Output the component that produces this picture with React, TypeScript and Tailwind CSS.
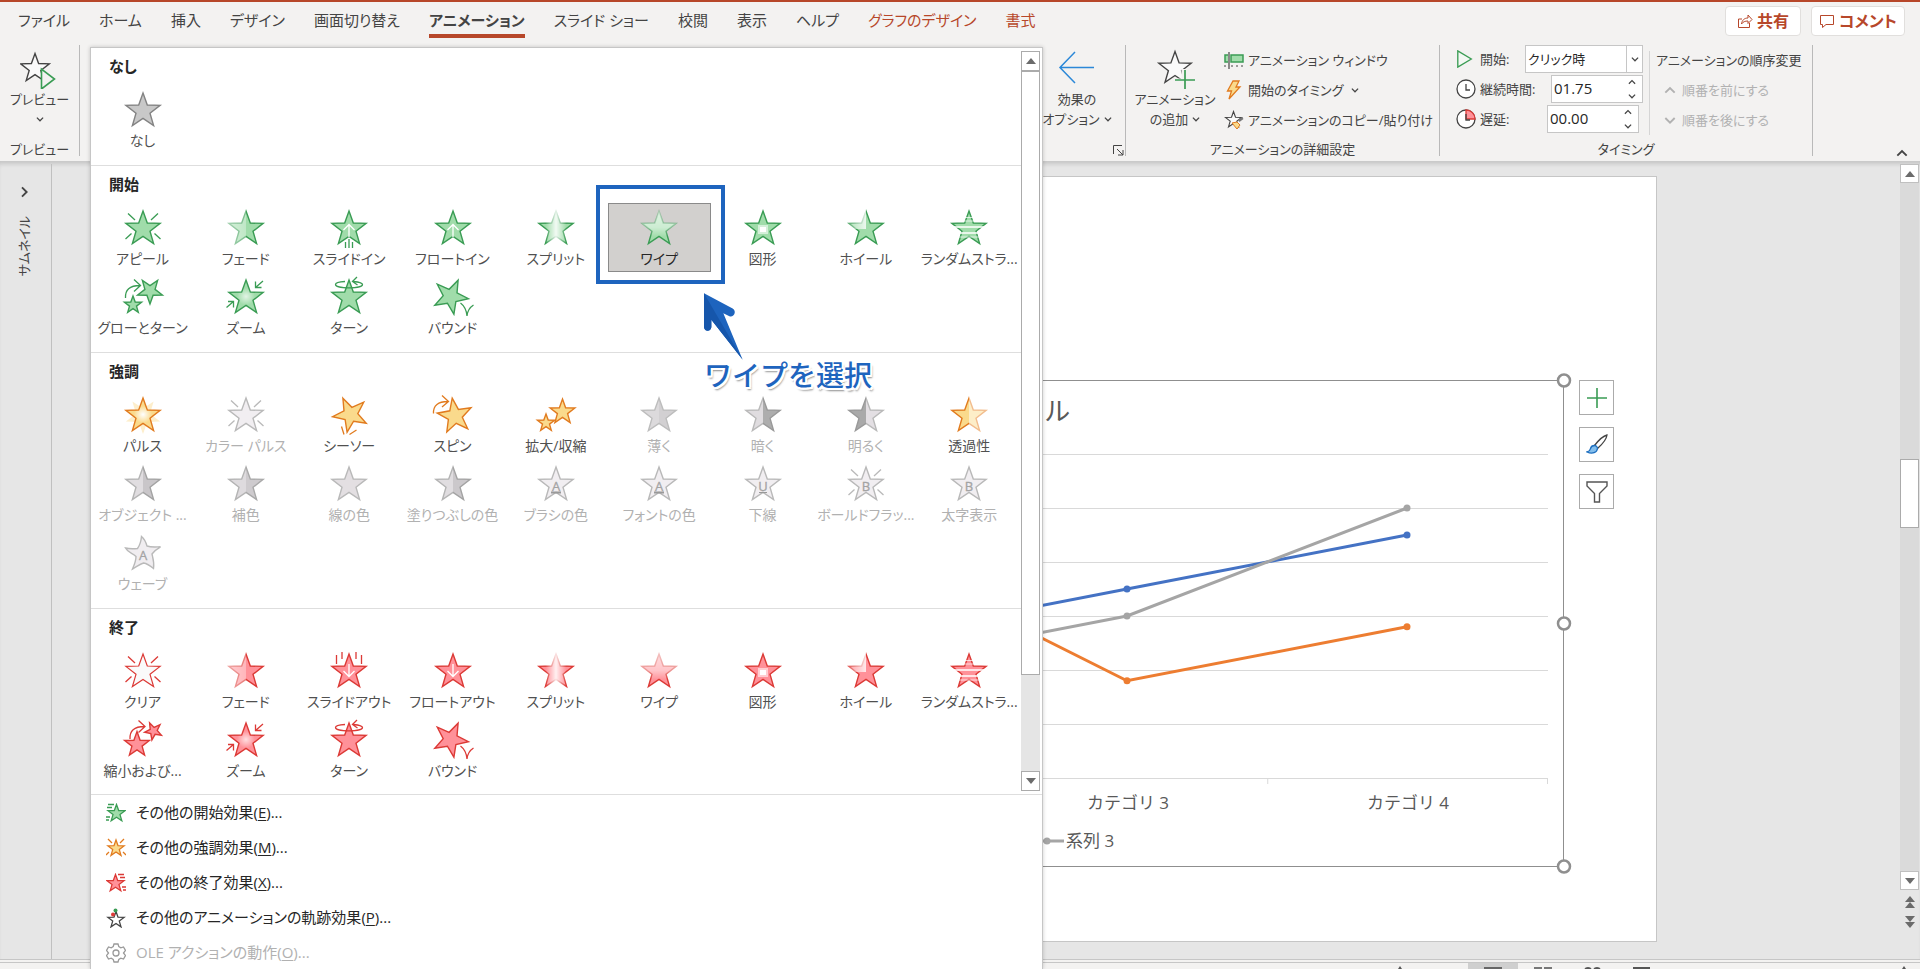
import type { ReactNode } from "react";

type Tone = "green" | "orange" | "red" | "gray" | "dark";

const tones: Record<Tone, { line: string; fill: string }> = {
  green: { line: "#3a9c54", fill: "#a0dcaa" },
  orange: { line: "#e17b1f", fill: "#fada8c" },
  red: { line: "#dc3a36", fill: "#ff9199" },
  gray: { line: "#b9b9b9", fill: "#e3dfe2" },
  dark: { line: "#838383", fill: "#c8c8c8" },
};

// points of a five pointed star, rot in degrees clockwise
function star(cx: number, cy: number, r: number, rot = 0) {
  const pts: string[] = [];
  for (let i = 0; i < 10; i++) {
    const a = ((i * 36 + rot - 90) * Math.PI) / 180;
    const d = i % 2 ? r * 0.41 : r;
    pts.push(`${(cx + d * Math.cos(a)).toFixed(1)},${(cy + d * Math.sin(a)).toFixed(1)}`);
  }
  return pts.join(" ");
}

const MAIN = star(24, 24, 18);

const rays = "M9 8.5l7 6.5M39 8.5l-7 6.5M6.5 34l6-5.5M41.5 34l-6-5.5";

// extra strokes drawn round the star in the tone's colour
const extras: Record<string, string> = {
  appear: rays,
  clear: rays,
  colorPulse: rays,
  boldFlash: rays,
  slideIn: "M20.5 37v6M24 34v9M27.5 37v6",
  slideOut: "M11.5 7v9M17 4v7M31 4v7M36.5 7v9",
  zoom: "M41 7l-7.5 6.5M33.5 7.5v6h6M4.5 33.5l7-6M6 27.5h5.5v6",
  turn: "M20 7.5c-5 .3-9.500 1.300-9.500 3 0 2 6 3.300 13.500 3.300s13.500-1.300 13.500-3.300c0-1.600-4-2.500-9-3M32 3l-4.500 4.500 5 3.500",
  bounce: "M31.5 29c4 3 6 7 6.500 13 .5-5 2.500-8.500 6.500-11",
  seesaw: "M16.5 34.5l2.500 8M24.500 42.500l7-4.500",
  spin: "M4.5 21.5c-.5-8 5-12 14-12M13 3.500l6.500 6-6.500 5.500",
  grow: "M6.5 24c-.5-8 4-12.500 14.500-12.500M15 5.500l6.500 6-6.500 6",
  shrink: "M11 22c-.5-8 4-12.500 14.500-12.500M19.500 3.500l6.500 6-6.500 6",
};

const halves: Record<string, [string, string, string, string]> = {
  objectColor: ["#e0dde0", "#c9c6c9", "#b4b4b4", "#a3a3a3"],
  complement: ["#dedbde", "#cecbce", "#b4b4b4", "#a9a9a9"],
  fillColor: ["#e0dde0", "#cbc8cb", "#b4b4b4", "#a3a3a3"],
  desaturate: ["#dcdadc", "#d2d0d2", "#bdbdbd", "#bdbdbd"],
  darken: ["#dfdcdf", "#adadad", "#b9b9b9", "#999999"],
  lighten: ["#a9a9a9", "#e3dfe3", "#999999", "#b9b9b9"],
  transparency: ["#fada8c", "#fdeec8", "#e17b1f", "#f2bd8e"],
};

const letters: Record<string, string> = {
  brushColor: "A",
  fontColor: "A",
  underline: "U",
  boldFlash: "B",
  boldReveal: "B",
  wave: "A",
};

function StarBody({ kind, tone }: { kind: string; tone: Tone }) {
  const { line, fill } = tones[tone];
  const id = `${kind}-${tone}`;
  const s = { stroke: line, fill, strokeWidth: 1.4 };

  if (halves[kind]) {
    const [f1, f2, s1, s2] = halves[kind];
    return (
      <>
        <defs>
          <linearGradient id={`${id}-f`} x1="7" x2="41" y1="0" y2="0" gradientUnits="userSpaceOnUse">
            <stop offset=".5" stopColor={f1} />
            <stop offset=".5" stopColor={f2} />
          </linearGradient>
          <linearGradient id={`${id}-s`} x1="7" x2="41" y1="0" y2="0" gradientUnits="userSpaceOnUse">
            <stop offset=".5" stopColor={s1} />
            <stop offset=".5" stopColor={s2} />
          </linearGradient>
        </defs>
        <polygon points={MAIN} fill={`url(#${id}-f)`} stroke={`url(#${id}-s)`} strokeWidth="1.4" />
      </>
    );
  }

  if (kind === "wave") {
    return (
      <path
        d="M22.5 6.5c3 2.500 4.500 6 5.500 9.500 4 1.500 8 1 13.500.8-3.500 2-6 4-8.500 7.200 1 4.500 2.500 8.500 1.500 14.500-3.500-3-6.500-5-10-5.500-4 1-7 4-11 6 2-4.500 3.500-8 3.500-12.500-3-3.500-8-3.500-10.500-8.500 4 1 7.500 1 12 .5 2.500-3.500 3.500-6.500 4-12z"
        fill="#f0edf0"
        stroke={line}
        strokeWidth="1.4"
      />
    );
  }

  if (letters[kind] || kind === "colorPulse") {
    return <polygon points={MAIN} {...s} fill="#f1eef1" />;
  }

  switch (kind) {
    case "fade":
    case "split":
    case "wipe":
    case "wheel": {
      const vertical = kind === "wipe";
      return (
        <>
          <defs>
            <linearGradient
              id={`${id}-g`}
              x1="7"
              y1="7"
              x2={vertical ? 7 : 41}
              y2={vertical ? 38 : 7}
              gradientUnits="userSpaceOnUse"
            >
              {kind === "fade" && (
                <>
                  <stop offset="0" stopColor="#777" />
                  <stop offset=".5" stopColor="#aaa" />
                  <stop offset=".5" stopColor="#fff" />
                </>
              )}
              {kind === "split" && (
                <>
                  <stop offset=".2" stopColor="#fff" />
                  <stop offset=".5" stopColor="#222" />
                  <stop offset=".8" stopColor="#fff" />
                </>
              )}
              {kind === "wipe" && (
                <>
                  <stop offset="0" stopColor="#555" />
                  <stop offset=".5" stopColor="#888" />
                  <stop offset=".8" stopColor="#fff" />
                </>
              )}
              {kind === "wheel" && (
                <>
                  <stop offset="0" stopColor="#ccc" />
                  <stop offset=".5" stopColor="#333" />
                </>
              )}
            </linearGradient>
            <mask id={`${id}-m`} maskUnits="userSpaceOnUse" x="0" y="0" width="48" height="44">
              {kind === "wheel" ? (
                <>
                  <rect width="48" height="44" fill="#fff" />
                  <rect width="24" height="24" fill={`url(#${id}-g)`} />
                </>
              ) : (
                <rect width="48" height="44" fill={`url(#${id}-g)`} />
              )}
            </mask>
          </defs>
          <polygon points={MAIN} fill="#fff" />
          <polygon points={MAIN} {...s} mask={`url(#${id}-m)`} />
        </>
      );
    }
    case "slideIn":
    case "floatIn":
      return (
        <>
          <polygon points={MAIN} {...s} />
          <path d="M24 32V19.5M18.500 25l5.500-5.500 5.500 5.500" fill="none" stroke="#fff" strokeWidth="1.3" />
        </>
      );
    case "slideOut":
    case "floatOut":
      return (
        <>
          <polygon points={MAIN} {...s} />
          <path d="M24 16v12.5M18.500 23l5.500 5.500 5.500-5.500" fill="none" stroke="#fff" strokeWidth="1.3" />
        </>
      );
    case "shape":
      return (
        <>
          <polygon points={MAIN} {...s} />
          <rect x="19" y="20" width="10" height="9" fill="#fff" opacity=".55" />
          <rect x="21" y="22" width="6" height="5" fill="#fff" />
        </>
      );
    case "random":
      return (
        <>
          <polygon points={MAIN} {...s} />
          <path d="M5 22h38M5 28h38" stroke="#fff" strokeWidth="1.3" />
          <path d="M5 16h38M5 32h38M5 12.5h38" stroke="#fff" strokeWidth="1" opacity=".7" />
        </>
      );
    case "zoom":
    case "pulse":
      return (
        <>
          <defs>
            <radialGradient id={`${id}-r`}>
              <stop offset="0" stopColor="#fff" stopOpacity={kind === "pulse" ? 1 : 0.7} />
              <stop offset=".6" stopColor="#fff" stopOpacity="0" />
            </radialGradient>
          </defs>
          {kind === "pulse" && <polygon points={star(24, 24, 18, 36)} fill="#fdeecb" />}
          <polygon points={MAIN} {...s} />
          <polygon points={star(24, 24, 16)} fill={`url(#${id}-r)`} />
        </>
      );
    case "clear":
      return <polygon points={MAIN} {...s} fill="#fafafa" strokeWidth="1.2" />;
    case "bounce":
      return <polygon points={star(21.5, 22.5, 18, 25)} {...s} />;
    case "seesaw":
      return <polygon points={star(25.5, 22.5, 18, -25)} {...s} />;
    case "spin":
      return <polygon points={star(26, 24, 18, -9)} {...s} />;
    case "grow":
      return (
        <>
          <polygon points={star(31, 17, 13, 180)} {...s} />
          <polygon points={star(14, 31, 9)} {...s} />
        </>
      );
    case "shrink":
      return (
        <>
          <polygon points={star(34.5, 14, 9, 190)} {...s} />
          <polygon points={star(18, 27.5, 13)} {...s} />
        </>
      );
    case "growShrink":
      return (
        <>
          <polygon points={star(30.5, 20, 13)} {...s} />
          <polygon points={star(14, 31, 9)} {...s} />
        </>
      );
    default:
      return <polygon points={MAIN} {...s} />;
  }
}

function EffectIcon({ kind, tone }: { kind: string; tone: Tone }) {
  return (
    <svg viewBox="0 0 48 44" className="h-11 w-12 shrink-0" aria-hidden="true">
      <StarBody kind={kind} tone={tone} />
      {extras[kind] && <path d={extras[kind]} fill="none" stroke={tones[tone].line} strokeWidth="1.3" />}
      {letters[kind] && (
        <text x="24" y="30" textAnchor="middle" fontSize="13" fill="#a3a3a3" stroke="#a3a3a3" strokeWidth=".3">
          {letters[kind]}
        </text>
      )}
      {(kind === "brushColor" || kind === "fontColor") && <path d="M19 31.5h10" stroke="#999" strokeWidth="2" />}
      {kind === "underline" && <path d="M20 31.5h8" stroke="#999" />}
    </svg>
  );
}

type Effect = { name: string; kind: string; tone?: Tone; selected?: boolean; off?: boolean };
type Section = { title: string; tone: Tone; effects: Effect[] };

const sections: Section[] = [
  { title: "なし", tone: "dark", effects: [{ name: "なし", kind: "plain" }] },
  {
    title: "開始",
    tone: "green",
    effects: [
      { name: "アピール", kind: "appear" },
      { name: "フェード", kind: "fade" },
      { name: "スライドイン", kind: "slideIn" },
      { name: "フロートイン", kind: "floatIn" },
      { name: "スプリット", kind: "split" },
      { name: "ワイプ", kind: "wipe", selected: true },
      { name: "図形", kind: "shape" },
      { name: "ホイール", kind: "wheel" },
      { name: "ランダムストラ...", kind: "random" },
      { name: "グローとターン", kind: "grow" },
      { name: "ズーム", kind: "zoom" },
      { name: "ターン", kind: "turn" },
      { name: "バウンド", kind: "bounce" },
    ],
  },
  {
    title: "強調",
    tone: "orange",
    effects: [
      { name: "パルス", kind: "pulse" },
      { name: "カラー パルス", kind: "colorPulse", tone: "gray", off: true },
      { name: "シーソー", kind: "seesaw" },
      { name: "スピン", kind: "spin" },
      { name: "拡大/収縮", kind: "growShrink" },
      { name: "薄く", kind: "desaturate", tone: "gray", off: true },
      { name: "暗く", kind: "darken", tone: "gray", off: true },
      { name: "明るく", kind: "lighten", tone: "gray", off: true },
      { name: "透過性", kind: "transparency" },
      { name: "オブジェクト ...", kind: "objectColor", tone: "gray", off: true },
      { name: "補色", kind: "complement", tone: "gray", off: true },
      { name: "線の色", kind: "plain", tone: "gray", off: true },
      { name: "塗りつぶしの色", kind: "fillColor", tone: "gray", off: true },
      { name: "ブラシの色", kind: "brushColor", tone: "gray", off: true },
      { name: "フォントの色", kind: "fontColor", tone: "gray", off: true },
      { name: "下線", kind: "underline", tone: "gray", off: true },
      { name: "ボールドフラッ...", kind: "boldFlash", tone: "gray", off: true },
      { name: "太字表示", kind: "boldReveal", tone: "gray", off: true },
      { name: "ウェーブ", kind: "wave", tone: "gray", off: true },
    ],
  },
  {
    title: "終了",
    tone: "red",
    effects: [
      { name: "クリア", kind: "clear" },
      { name: "フェード", kind: "fade" },
      { name: "スライドアウト", kind: "slideOut" },
      { name: "フロートアウト", kind: "floatOut" },
      { name: "スプリット", kind: "split" },
      { name: "ワイプ", kind: "wipe" },
      { name: "図形", kind: "shape" },
      { name: "ホイール", kind: "wheel" },
      { name: "ランダムストラ...", kind: "random" },
      { name: "縮小および...", kind: "shrink" },
      { name: "ズーム", kind: "zoom" },
      { name: "ターン", kind: "turn" },
      { name: "バウンド", kind: "bounce" },
    ],
  },
];

const tabs = [
  "ファイル",
  "ホーム",
  "挿入",
  "デザイン",
  "画面切り替え",
  "アニメーション",
  "スライド ショー",
  "校閲",
  "表示",
  "ヘルプ",
  "グラフのデザイン",
  "書式",
];

function Chevron({ dir = "down", className = "" }: { dir?: "up" | "down" | "right"; className?: string }) {
  const d = { down: "M1 3l3.5 3.5L8 3", up: "M1 6.5L4.5 3 8 6.5", right: "M3 1l3.5 3.5L3 8" }[dir];
  return (
    <svg viewBox="0 0 9 9" className={`shrink-0 ${className || "size-2"}`} aria-hidden="true">
      <path d={d} fill="none" stroke="currentColor" strokeWidth="1.4" />
    </svg>
  );
}

function Triangle({ up = false }: { up?: boolean }) {
  return (
    <svg viewBox="0 0 10 6" className="h-[6px] w-[10px]" aria-hidden="true">
      <path d={up ? "M0 6l5-6 5 6z" : "M0 0l5 6 5-6z"} fill="#6b6b6b" />
    </svg>
  );
}

function TabBar() {
  return (
    <div className="flex h-[43px] shrink-0 items-start justify-between pr-[15px] pl-[18px]">
      <nav className="flex gap-[29px] text-[15px]">
        {tabs.map((tab) => {
          const active = tab === "アニメーション";
          const context = tab === "グラフのデザイン" || tab === "書式";
          return (
            <button
              key={tab}
              className={`h-9 border-b-4 pt-1.5 whitespace-nowrap ${
                active ? "border-[#b7472a] font-bold" : "border-transparent"
              } ${context ? "text-[#b7472a]" : ""}`}
            >
              {tab}
            </button>
          );
        })}
      </nav>
      <div className="flex gap-2.5 pt-1 text-base font-bold text-[#b7472a]">
        <button className="flex h-[30px] w-[76px] items-center justify-center gap-1 rounded-sm border border-[#e1dfdd] bg-white">
          <svg viewBox="0 0 16 16" className="size-4" fill="none" stroke="currentColor" aria-hidden="true">
            <path d="M5 6H1.5v8.500h11V10M4.500 11c.5-4 3-6 6.500-6V2l4 4.500-4 4V8c-3 0-5 .8-6.500 3z" />
          </svg>
          共有
        </button>
        <button className="flex h-[30px] w-[94px] items-center justify-center gap-1 rounded-sm border border-[#e1dfdd] bg-white">
          <svg viewBox="0 0 16 16" className="size-4" fill="none" stroke="currentColor" aria-hidden="true">
            <path d="M1.5 2.5h13v9H7l-3.500 3v-3h-2z" />
          </svg>
          コメント
        </button>
      </div>
    </div>
  );
}

function Group({ label, className, children }: { label: string; className: string; children: ReactNode }) {
  return (
    <section className={`flex h-[111px] shrink-0 flex-col border-r border-[#b9b9b9] ${className}`}>
      <div className="flex flex-1">{children}</div>
      <div className="h-[15px] text-center leading-4 whitespace-nowrap">{label}</div>
    </section>
  );
}

function TimeField({ id, value }: { id: string; value: string }) {
  return (
    <div className="flex h-7 w-[92px] items-center border border-[#c6c6c6] bg-white pr-1.5">
      <input id={id} defaultValue={value} className="w-16 min-w-0 pl-0.5 text-[15px] text-[#262626] outline-none" />
      <span className="ml-auto flex flex-col gap-1.5">
        <Chevron dir="up" />
        <Chevron />
      </span>
    </div>
  );
}

function Ribbon() {
  return (
    <div className="flex h-[116px] shrink-0 text-[13px]">
      <Group label="プレビュー" className="w-20">
        <button className="flex w-full flex-col items-center pt-1">
          <svg viewBox="0 0 40 40" className="size-10" fill="none" aria-hidden="true">
            <polygon points={star(15, 19.5, 15)} fill="#fafafa" stroke="#444" strokeWidth="1.4" />
            <path d="M21.5 20v20l13-10z" fill="#f3f2f1" stroke="#3a9c54" strokeWidth="1.6" />
          </svg>
          <span className="leading-5">プレビュー</span>
          <Chevron className="mt-1.5 size-2" />
        </button>
      </Group>

      <div className="flex h-[111px] w-[1046px] shrink-0 items-start justify-end border-r border-[#b9b9b9]">
        <button className="flex w-20 flex-col items-center pt-1 leading-5">
          <svg viewBox="0 0 40 40" className="size-10" fill="none" aria-hidden="true">
            <path d="M37 18.5H3M18 3L3 18.500 18 34" stroke="#2b88d8" strokeWidth="1.5" />
          </svg>
          <span>効果の</span>
          <span className="flex items-center gap-1 whitespace-nowrap">
            オプション <Chevron />
          </span>
        </button>
        <button aria-label="その他のオプション" className="w-2 self-end">
          <svg viewBox="0 0 11 11" className="-ml-1 size-[11px]" fill="none" stroke="#444" aria-hidden="true">
            <path d="M.5 9V.5H9M4 4l6 6M10 5v5H5" />
          </svg>
        </button>
      </div>

      <Group label="アニメーションの詳細設定" className="w-[314px]">
        <button className="flex w-[98px] flex-col items-center pt-1 leading-5 whitespace-nowrap">
          <svg viewBox="0 0 40 40" className="size-10" fill="none" aria-hidden="true">
            <polygon points={star(20, 19.5, 17)} fill="#fafafa" stroke="#444" strokeWidth="1.4" />
            <path d="M19 32h21M29 20v20" stroke="#f3f2f1" strokeWidth="5" />
            <path d="M20 31h20M30 21v20" stroke="#3a9c54" strokeWidth="1.7" />
          </svg>
          <span>アニメーション</span>
          <span className="flex items-center gap-1">
            の追加 <Chevron />
          </span>
        </button>
        <div className="flex flex-col whitespace-nowrap">
          <button className="flex h-[30px] items-center gap-1">
            <svg viewBox="0 0 20 20" className="size-5" aria-hidden="true">
              <path d="M5 2v17" stroke="#444" strokeWidth="1.2" />
              <path d="M4 5H1v7h3M7 5h12v7H7z" fill="#a0dcaa" stroke="#3a9c54" strokeWidth="1.5" />
              <path d="M8 15v2M13 15v2M18 15v2M1 15v2" stroke="#444" />
            </svg>
            アニメーション ウィンドウ
          </button>
          <button className="flex h-[30px] items-center gap-1">
            <svg viewBox="0 0 20 20" className="size-5" aria-hidden="true">
              <path d="M9 1h6l-3 6h4L5 19l2.5-8H3.500z" fill="#fada8c" stroke="#e17b1f" strokeWidth="1.3" />
            </svg>
            <span className="mr-1">開始のタイミング</span>
            <Chevron />
          </button>
          <button className="flex h-[30px] items-center gap-1">
            <svg viewBox="0 0 20 20" className="size-5" aria-hidden="true">
              <polygon points={star(9.5, 10, 8.5)} fill="#fafafa" stroke="#444" strokeWidth="1.1" />
              <path d="M14 10l4-3 1.5 2-4 3z" fill="#777" />
              <path d="M8 13l5-1 3 3-3 4z" fill="#fada8c" stroke="#e17b1f" />
            </svg>
            アニメーションのコピー/貼り付け
          </button>
        </div>
      </Group>

      <Group label="タイミング" className="w-[373px]">
        <div className="flex w-[209px] flex-col gap-0.5 pr-1.5 pl-4">
          <div className="flex h-7 items-center gap-1.5">
            <svg viewBox="0 0 20 20" className="size-[18px] shrink-0" aria-hidden="true">
              <path d="M2 1v18l15-9z" fill="#f3f8f3" stroke="#3a9c54" strokeWidth="1.5" />
            </svg>
            <label htmlFor="start">開始:</label>
            <div className="relative ml-auto w-[118px] shrink-0">
              <select
                id="start"
                className="h-7 w-full appearance-none rounded-none border border-[#c6c6c6] bg-white pl-0.5 text-[#262626]"
              >
                <option>クリック時</option>
              </select>
              <span className="pointer-events-none absolute inset-y-px right-px flex w-4 items-center justify-center border-l border-[#c6c6c6]">
                <Chevron />
              </span>
            </div>
          </div>
          <div className="flex h-7 items-center gap-1 whitespace-nowrap">
            <svg viewBox="0 0 20 20" className="size-5 shrink-0" fill="none" aria-hidden="true">
              <circle cx="10" cy="10" r="9" fill="#fff" stroke="#444" strokeWidth="1.3" />
              <path d="M10 5v6h4" stroke="#444" strokeWidth="1.3" />
            </svg>
            <label htmlFor="duration">継続時間:</label>
            <div className="ml-auto">
              <TimeField id="duration" value="01.75" />
            </div>
          </div>
          <div className="flex h-7 items-center gap-1">
            <svg viewBox="0 0 20 20" className="size-5 shrink-0" fill="none" aria-hidden="true">
              <circle cx="10" cy="10" r="9" fill="#fff" stroke="#444" strokeWidth="1.3" />
              <path d="M10 1a9 9 0 0 1 9 9h-9z" fill="#ff9199" stroke="#dc3a36" strokeWidth="1.3" />
              <path d="M10 5v6h4" stroke="#444" strokeWidth="1.3" />
            </svg>
            <label htmlFor="delay">遅延:</label>
            <div className="mr-1 ml-auto">
              <TimeField id="delay" value="00.00" />
            </div>
          </div>
        </div>
        <div className="my-1.5 border-l border-[#d5d5d5]" />
        <div className="flex flex-col pl-1.5 whitespace-nowrap">
          <span className="flex h-[30px] items-center">アニメーションの順序変更</span>
          <button disabled className="flex h-[30px] items-center gap-1.5 pl-2 text-[#b1b1b1]">
            <Chevron dir="up" className="size-3" />
            順番を前にする
          </button>
          <button disabled className="flex h-[30px] items-center gap-1.5 pl-2 text-[#b1b1b1]">
            <Chevron className="size-3" />
            順番を後にする
          </button>
        </div>
      </Group>
      <button aria-label="リボンを折りたたむ" className="mt-auto mr-3 mb-0.5 ml-auto">
        <Chevron dir="up" className="size-3" />
      </button>
    </div>
  );
}

function Marked({ text, letter }: { text: string; letter: string }) {
  return (
    <span>
      {text}(<u className="underline-offset-2">{letter}</u>)...
    </span>
  );
}

function MoreIcon({ kind }: { kind: string }) {
  const color = { e: "#3a9c54", m: "#e17b1f", x: "#dc3a36", p: "#444", o: "#999" }[kind];
  return (
    <svg viewBox="0 0 20 20" className="size-5" fill="none" stroke={color} strokeWidth="1.3" aria-hidden="true">
      {kind === "e" && (
        <>
          <polygon points={star(10.5, 10.5, 9)} fill="#a0dcaa" />
          <path d="M2 1.5h6M1 4.500h5M0 14h4M0 17h3" />
        </>
      )}
      {kind === "m" && (
        <>
          <polygon points={star(10, 10.5, 8.5)} fill="#fada8c" />
          <path d="M2 1l4 4M18 1l-4 4M0 17l3-3M20 17l-3-3" />
        </>
      )}
      {kind === "x" && (
        <>
          <polygon points={star(9.5, 10.5, 9)} fill="#ff9199" />
          <path d="M12 1.5h6M14 4.500h5M16 14h4M17 17h3" />
        </>
      )}
      {kind === "p" && (
        <>
          <polygon points={star(10, 12, 8.5)} />
          <circle cx="9.5" cy="2.5" r="2" fill="#3a9c54" stroke="none" />
          <circle cx="7" cy="6.5" r="2" fill="#dc3a36" stroke="none" />
        </>
      )}
      {kind === "o" && (
        <>
          <path d="M8 1h4l.8 2.600 2 1.200 2.700-.8 2 3.400-2 2.600 2 2.600-2 3.400-2.700-.8-2 1.200L12 19H8l-.8-2.600-2-1.200-2.700.8-2-3.400 2-2.600-2-2.600 2-3.400 2.700.8 2-1.200z" />
          <circle cx="10" cy="10" r="3" />
        </>
      )}
    </svg>
  );
}

const moreItems = [
  { kind: "e", text: "その他の開始効果", letter: "E" },
  { kind: "m", text: "その他の強調効果", letter: "M" },
  { kind: "x", text: "その他の終了効果", letter: "X" },
  { kind: "p", text: "その他のアニメーションの軌跡効果", letter: "P" },
  { kind: "o", text: "OLE アクションの動作", letter: "O" },
];

function Gallery() {
  return (
    <div className="absolute top-[45px] bottom-0 left-[90px] z-10 flex w-[953px] flex-col overflow-hidden border border-b-0 border-[#c6c6c6] bg-white text-[#262626] shadow-[0_0_4px_rgba(0,0,0,0.2)]">
      <div className="flex shrink-0 border-b border-[#dedede]">
        <div className="w-[930px]">
          {sections.map((section) => (
            <section key={section.title} className="border-b border-[#dedede] pb-[11px] last:border-b-0 last:pb-2.5">
              <h2 className="h-[37px] pt-1.5 pl-[18px] text-[15px] leading-6 font-bold">{section.title}</h2>
              <div className="grid grid-cols-9">
                {section.effects.map((effect) => (
                  <button
                    key={effect.name}
                    disabled={effect.off}
                    className={`flex h-[69px] w-[103px] flex-col items-center border pt-px text-sm leading-5 whitespace-nowrap ${
                      effect.selected ? "border-[#8a8a8a] bg-[#d2d0ce]" : "border-transparent"
                    } ${effect.off ? "text-[#b1b1b1]" : effect.selected ? "" : "text-[#505050]"}`}
                  >
                    <EffectIcon kind={effect.kind} tone={effect.tone ?? section.tone} />
                    {effect.name}
                  </button>
                ))}
              </div>
            </section>
          ))}
        </div>
        <div className="my-[3px] flex w-[19px] flex-col bg-[#e5e5e5]">
          <div className="flex h-5 items-center justify-center border border-[#ababab] bg-white">
            <Triangle up />
          </div>
          <div className="h-[604px] border border-[#ababab] bg-white" />
          <div className="mt-auto flex h-5 items-center justify-center border border-[#ababab] bg-white">
            <Triangle />
          </div>
        </div>
      </div>
      <div className="flex flex-col">
        {moreItems.map((item) => (
          <button
            key={item.kind}
            disabled={item.kind === "o"}
            className={`flex h-[35px] shrink-0 items-center gap-2.5 pl-[15px] text-[15px] ${
              item.kind === "o" ? "text-[#b1b1b1]" : ""
            }`}
          >
            <MoreIcon kind={item.kind} />
            <Marked text={item.text} letter={item.letter} />
          </button>
        ))}
      </div>
    </div>
  );
}

const series = [
  { color: "#4472c4", values: [4.3, 2.5, 3.5, 4.5] },
  { color: "#ed7d31", values: [2.4, 4.4, 1.8, 2.8] },
  { color: "#a5a5a5", values: [2, 2, 3, 5] },
];

function Chart() {
  const x = (i: number) => 180 + i * 280;
  const y = (v: number) => 398 - v * 54;
  return (
    <svg
      viewBox="0 0 1176 487"
      className="w-full overflow-visible [font-feature-settings:normal]"
      fontSize="17"
      fill="#595959"
    >
      <rect x=".5" y=".5" width="1175" height="486" fill="none" stroke="#8f8f8f" />
      <text x="588" y="41" textAnchor="middle" fontSize="26">
        グラフ タイトル
      </text>
      {[0, 1, 2, 3, 4, 5, 6].map((v) => (
        <path key={v} d={`M40 ${y(v) + 0.5}H1160`} stroke="#d9d9d9" />
      ))}
      {[0, 1, 2, 3, 4].map((i) => (
        <path key={i} d={`M${40.5 + i * 279.75} 398v6`} stroke="#d9d9d9" />
      ))}
      {series.map((s) => (
        <g key={s.color} fill={s.color}>
          <polyline
            points={s.values.map((v, i) => `${x(i) - 1},${y(v)}`).join(" ")}
            fill="none"
            stroke={s.color}
            strokeWidth="3"
          />
          {s.values.map((v, i) => (
            <circle key={i} cx={x(i) - 1} cy={y(v)} r="3.5" />
          ))}
        </g>
      ))}
      {[1, 2, 3, 4].map((n) => (
        <text key={n} x={x(n - 1)} y="429" textAnchor="middle">
          カテゴリ {n}
        </text>
      ))}
      {series.map((s, i) => (
        <g key={s.color}>
          <path d={`M${450 + i * 98} 461h30`} stroke={s.color} strokeWidth="3" />
          <circle cx={463 + i * 98} cy="461" r="3.5" fill={s.color} />
          <text x={482 + i * 98} y="467">
            系列 {i + 1}
          </text>
        </g>
      ))}
      {[0.5, 243.5, 486.5].map((cy) => (
        <circle key={cy} cx="1176" cy={cy} r="6" fill="#fff" stroke="#8f8f8f" strokeWidth="2.5" />
      ))}
    </svg>
  );
}

function Workspace() {
  const side = "flex size-[35px] items-center justify-center border border-[#ababab] bg-white";
  return (
    <main className="flex min-h-0 flex-1 border-b border-[#c6c6c6] bg-[#e6e6e6] shadow-[inset_0_5px_4px_-2px_rgba(0,0,0,0.14)]">
      <div className="mt-[3px] flex w-[52px] shrink-0 flex-col items-center gap-[18px] border-r border-[#c0c0c0] pt-[22px] pr-1">
        <Chevron dir="right" className="size-3" />
        <span className="text-[13px] leading-5 whitespace-nowrap [writing-mode:sideways-lr]">サムネイル</span>
      </div>
      <div className="flex min-w-0 flex-1 px-[243px] pt-[15px] pb-[17px]">
        <div className="flex flex-1 items-start gap-[15px] border border-[#c6c6c6] bg-white pt-[203px] pr-[42px] pl-[92px]">
          <div className="min-w-0 flex-1">
            <Chart />
          </div>
          <div className="flex flex-col gap-3">
            <button className={side} aria-label="グラフ要素">
              <svg viewBox="0 0 22 22" className="size-[22px]" aria-hidden="true">
                <path d="M11 1v20M1 11h20" stroke="#3a9c54" strokeWidth="1.6" />
              </svg>
            </button>
            <button className={side} aria-label="グラフ スタイル">
              <svg viewBox="0 0 22 22" className="size-[22px]" fill="none" aria-hidden="true">
                <path d="M8.5 11.5C12 7 17 2 21 1c-.5 4-5 9.500-9.500 13.500z" fill="#fff" stroke="#444" strokeWidth="1.3" />
                <path
                  d="M8.5 11.5c1.500 0 3 1.500 3 3-.5 4-5 6-10.500 3.500 3-.5 3-1.500 3.500-3.500s2-3 4-3z"
                  fill="#83beec"
                  stroke="#1e6fbf"
                  strokeWidth="1.3"
                />
              </svg>
            </button>
            <button className={side} aria-label="グラフ フィルター">
              <svg viewBox="0 0 22 22" className="size-[22px]" fill="none" aria-hidden="true">
                <path d="M1 1h20v4l-7.5 7.500V21h-5v-8.500L1 5z" stroke="#555" strokeWidth="1.4" />
              </svg>
            </button>
          </div>
        </div>
      </div>
      <div className="mt-[3px] flex w-5 shrink-0 flex-col pr-px">
        <div className="flex h-[19px] items-center justify-center border border-[#c0c0c0] bg-white">
          <Triangle up />
        </div>
        <div className="flex-1 bg-[#dadada] pt-[276px]">
          <div className="h-[69px] border border-[#ababab] bg-white" />
        </div>
        <div className="flex h-[19px] items-center justify-center border border-[#c0c0c0] bg-white">
          <Triangle />
        </div>
        <div className="flex h-[69px] flex-col items-center gap-2 pt-1.5">
          <div>
            <Triangle up />
            <Triangle up />
          </div>
          <div>
            <Triangle />
            <Triangle />
          </div>
        </div>
      </div>
    </main>
  );
}

function StatusBar() {
  return (
    <footer className="mt-0.5 flex h-[7px] shrink-0 items-start justify-end overflow-hidden border-t border-[#c6c6c6] bg-[#f3f2f1] pr-3">
      <svg viewBox="0 0 8 8" className="mt-[3px] mr-16 size-2" aria-hidden="true">
        <path d="M0 6l4-6 4 6z" fill="#555" />
      </svg>
      <span className="mr-4 flex h-7 w-[50px] shrink-0 justify-center bg-[#cfcfcf] pt-1">
        <span className="h-3 w-[18px] border-2 border-[#666]" />
      </span>
      <span className="mr-8 flex gap-0.5 pt-1">
        <span className="size-2 border-2 border-[#777]" />
        <span className="size-2 border-2 border-[#777]" />
      </span>
      <span className="mr-8 flex gap-px pt-1">
        <span className="h-3 w-2 rounded-t-sm border-2 border-[#555]" />
        <span className="h-3 w-2 rounded-t-sm border-2 border-[#555]" />
      </span>
      <span className="mt-1 mr-[250px] h-3 w-[17px] border-2 border-[#555]" />
      <svg viewBox="0 0 8 8" className="mt-[3px] size-2" aria-hidden="true">
        <path d="M0 6l4-6 4 6z" fill="#555" />
      </svg>
    </footer>
  );
}

// blue frame, arrow and caption that point at the wipe effect
function Callout() {
  return (
    <>
      <div className="pointer-events-none absolute top-[183px] left-[596px] z-20 h-[99px] w-[129px] border-4 border-[#1e64be]" />
      <svg viewBox="0 0 120 200" className="absolute top-[291px] left-[704px] z-20 h-[67px] w-10" aria-hidden="true">
        <path d="M0 0l86 46c12 7 6 26-8 24l-20-10 58 140L22 80v22c-2 14-20 14-22 0z" fill="#1e64be" />
        <path d="M0 0l116 200L22 80v22c-2 14-20 14-22 0z" fill="#1656ab" />
      </svg>
      <p className="absolute top-[353px] left-[704px] z-20 text-[28px] leading-10 font-medium whitespace-nowrap text-[#1e64be] [font-feature-settings:normal] [text-shadow:2px_0_#fff,-2px_0_#fff,0_2px_#fff,0_-2px_#fff,2px_2px_#fff,-2px_2px_#fff,2px_3px_2px_#888]">
        ワイプを選択
      </p>
    </>
  );
}

export default function App() {
  return (
    <div className="relative flex h-screen flex-col overflow-hidden border-t-2 border-[#b7472a] bg-[#f3f2f1] font-['Open_Sans','Noto_Sans_CJK_JP',sans-serif] text-sm text-[#444] [font-feature-settings:'palt']">
      <TabBar />
      <Ribbon />
      <Workspace />
      <StatusBar />
      <Gallery />
      <Callout />
    </div>
  );
}
